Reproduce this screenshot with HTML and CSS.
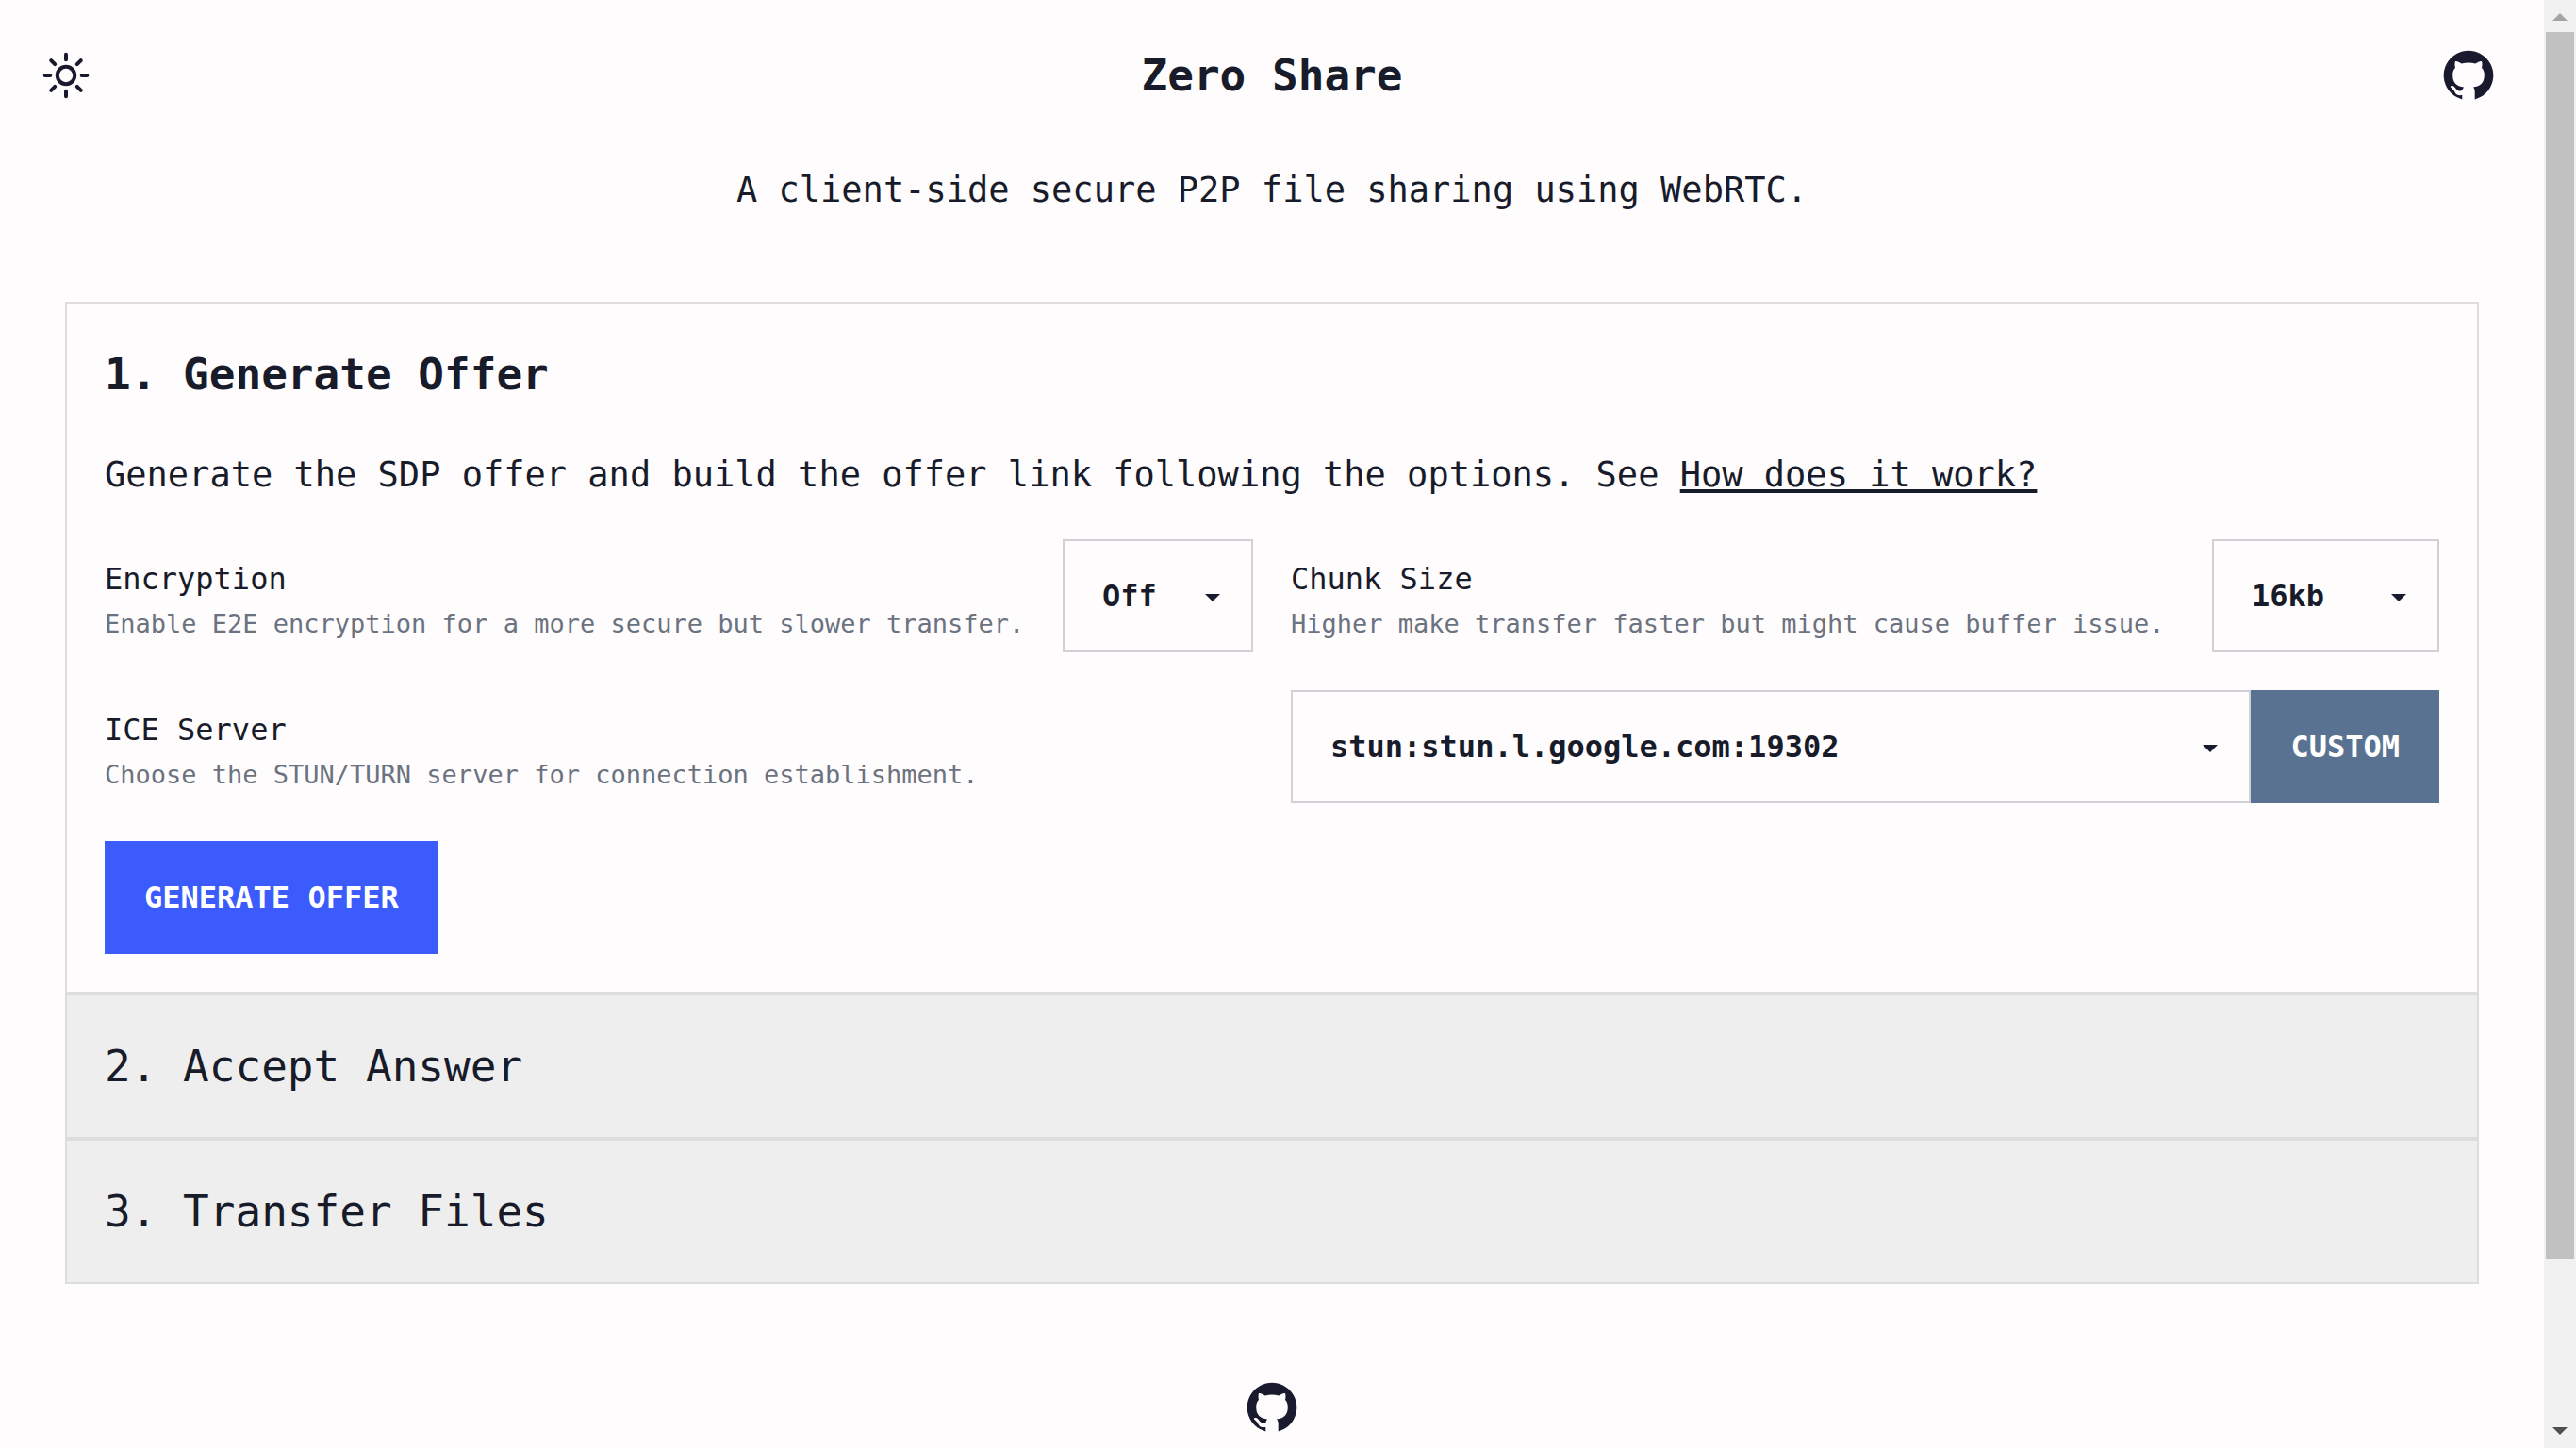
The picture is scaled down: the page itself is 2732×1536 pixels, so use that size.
FILE: index.html
```html
<!DOCTYPE html>
<html lang="en">
<head>
  <meta charset="utf-8">
  <meta name="viewport" content="width=device-width, initial-scale=1">
  <title>Zero Share</title>
  <link rel="stylesheet" href="styles.css">
</head>
<body>
  <svg class="sprite" aria-hidden="true">
    <symbol id="github" viewBox="0 0 64 64">
      <path d="M38.7 57.4A26.3 26.3 0 1 0 25.3 57.4V53C21.5 53.4 19.2 53.2 17.6 50C16.4 47.4 15 46 13 44.4C12.2 43.4 14.2 42.6 15.8 43.2C17.4 43.8 18.4 46 19.6 47.2C21.2 48.8 24 48.6 25.6 47.8C25.8 46.4 26.2 45.4 27 44.4C20.5 43.6 15.2 40.8 15.2 31.4C15.2 28 16.4 25.6 18 24C17.4 22 17.3 19.5 18 17C19.6 16.6 22 17.6 24.6 19.4C29.4 18.2 34.6 18.2 39.4 19.4C42 17.6 44.4 16.6 46 17C46.7 19.5 46.6 22 46 24C47.6 25.6 48.8 28 48.8 31.4C48.8 40.8 43.5 43.6 37 44.4C38.2 45.6 38.7 47.4 38.7 49.4Z"/>
    </symbol>
  </svg>

  <div class="page">
    <header class="header">
      <button class="icon-button" type="button" aria-label="Toggle theme">
        <svg class="sun" viewBox="0 0 60 60" aria-hidden="true">
          <circle cx="30" cy="30" r="9.2"/>
          <path d="M30 7.7v5.6M30 46.7v5.6M7.7 30h5.6M46.7 30h5.6M14.2 14.2l4 4M41.8 41.8l4 4M14.2 45.8l4-4M41.8 18.2l4-4"/>
        </svg>
      </button>
      <h1 class="title">Zero Share</h1>
      <a class="icon-link" href="#" aria-label="GitHub repository"><svg class="github"><use href="#github"/></svg></a>
    </header>
    <p class="tagline">A client-side secure P2P file sharing using WebRTC.</p>

    <main class="steps">
      <section class="step step-active">
        <h2 class="step-title">1. Generate Offer</h2>
        <p class="lead">Generate the SDP offer and build the offer link following the options. See <a class="link" href="#">How does it work?</a></p>
        <form class="options">
          <div class="option">
            <label class="caption" for="encryption">
              <span class="name">Encryption</span>
              <span class="hint">Enable E2E encryption for a more secure but slower transfer.</span>
            </label>
            <select class="select select-short" id="encryption"><option>Off</option><option>On</option></select>
          </div>
          <div class="option">
            <label class="caption" for="chunk">
              <span class="name">Chunk Size</span>
              <span class="hint">Higher make transfer faster but might cause buffer issue.</span>
            </label>
            <select class="select select-medium" id="chunk"><option>16kb</option><option>32kb</option></select>
          </div>
          <label class="caption" for="ice">
            <span class="name">ICE Server</span>
            <span class="hint">Choose the STUN/TURN server for connection establishment.</span>
          </label>
          <div class="group">
            <select class="select select-wide" id="ice"><option>stun:stun.l.google.com:19302</option></select>
            <button class="button button-muted" type="button">CUSTOM</button>
          </div>
          <button class="button button-primary" type="button">GENERATE OFFER</button>
        </form>
      </section>
      <section class="step"><h2 class="step-title">2. Accept Answer</h2></section>
      <section class="step"><h2 class="step-title">3. Transfer Files</h2></section>
    </main>

    <footer class="footer">
      <a class="icon-link" href="#" aria-label="GitHub"><svg class="github"><use href="#github"/></svg></a>
    </footer>
  </div>

  <div class="scrollbar" aria-hidden="true">
    <svg class="arrow arrow-up" viewBox="0 0 16 8"><path d="M8 0l8 8H0z"/></svg>
    <div class="track"><div class="thumb"></div></div>
    <svg class="arrow arrow-down" viewBox="0 0 16 8"><path d="M0 0h16L8 8z"/></svg>
  </div>
</body>
</html>
```
FILE: styles.css
```css
:root {
  --bg: #fefcfd;
  --ink: #181b2a;
  --muted: #6b7280;
  --line: #dddddd;
  --field-line: #d0d0d6;
  --scrollbar: 34px;
  --mono: "DejaVu Sans Mono", "Liberation Mono", monospace;
}

* {
  box-sizing: border-box;
}

body {
  margin: 0;
  padding-right: var(--scrollbar);
  background: var(--bg);
  color: var(--ink);
  font: 37px/60px var(--mono);
}

h1, h2, p {
  margin: 0;
}

.sprite {
  display: none;
}

.header {
  display: grid;
  grid-template-columns: 1fr auto 1fr;
  align-items: center;
  padding: 40px;
}

.title,
.step-title {
  font-size: 46px;
  line-height: 70px;
}

.icon-button {
  width: 60px;
  height: 60px;
  padding: 0;
  border: 0;
  background: none;
}

.sun {
  display: block;
  width: 60px;
  height: 60px;
  fill: none;
  stroke: #1a1a2e;
  stroke-width: 4;
  stroke-linecap: round;
}

.icon-link {
  display: grid;
  place-items: center;
  justify-self: end;
  width: 80px;
  height: 80px;
}

.github {
  width: 64px;
  height: 64px;
  fill: #1a1a2e;
}

.tagline {
  padding: 12px 40px 88px;
  text-align: center;
}

.steps {
  max-width: 2560px;
  margin: 0 auto;
}

.step {
  padding: 40px;
  border: 2px solid var(--line);
  background: #eeeeee;
}

.step .step-title {
  font-weight: 400;
}

.step-active {
  background: var(--bg);
}

.step-active .step-title {
  font-weight: 700;
}

.lead {
  margin: 42px 0 38px;
}

.link {
  color: inherit;
  text-decoration-thickness: 4px;
  text-decoration-skip-ink: none;
  text-underline-offset: 3px;
}

.options {
  display: grid;
  grid-template-columns: 1fr 1fr;
  gap: 40px;
}

.option,
.group {
  display: flex;
}

.caption {
  display: flex;
  flex: 1;
  flex-direction: column;
  justify-content: center;
  padding-top: 12px;
}

.name {
  font-size: 32px;
  line-height: 48px;
}

.hint {
  color: var(--muted);
  font-size: 27px;
  line-height: 48px;
}

.select,
.button {
  height: 120px;
  padding: 0 40px;
  border-radius: 0;
  font: 700 32px/48px var(--mono);
}

.select {
  appearance: none;
  border: 2px solid var(--field-line);
  background: var(--bg) url("data:image/svg+xml,%3Csvg xmlns='http://www.w3.org/2000/svg' width='16' height='8'%3E%3Cpath d='M0 0h16L8 8z' fill='%231a1a2e'/%3E%3C/svg%3E") no-repeat right 33px top 56px;
  color: var(--ink);
}

.select-short {
  width: 202px;
}

.select-medium {
  width: 241px;
}

.select-wide {
  flex: 1;
}

.button {
  border: 2px solid;
  color: #ffffff;
}

.button-muted {
  border-color: #5a7291;
  background: #5a7291;
}

.button-primary {
  justify-self: start;
  border-color: #3b5bfd;
  background: #3b5bfd;
}

.footer {
  display: flex;
  justify-content: center;
  padding: 91px 40px 3px;
}

.scrollbar {
  position: fixed;
  inset: 0 0 0 auto;
  display: flex;
  flex-direction: column;
  gap: 12px;
  width: var(--scrollbar);
  padding: 14px 2px;
  background: #f1f1f1;
}

.arrow {
  align-self: center;
  width: 16px;
  height: 8px;
}

.arrow-up {
  fill: #a3a3a3;
}

.arrow-down {
  fill: #505050;
}

.track {
  flex: 1;
}

.thumb {
  height: 88.7%;
  background: #c1c1c1;
}
```
